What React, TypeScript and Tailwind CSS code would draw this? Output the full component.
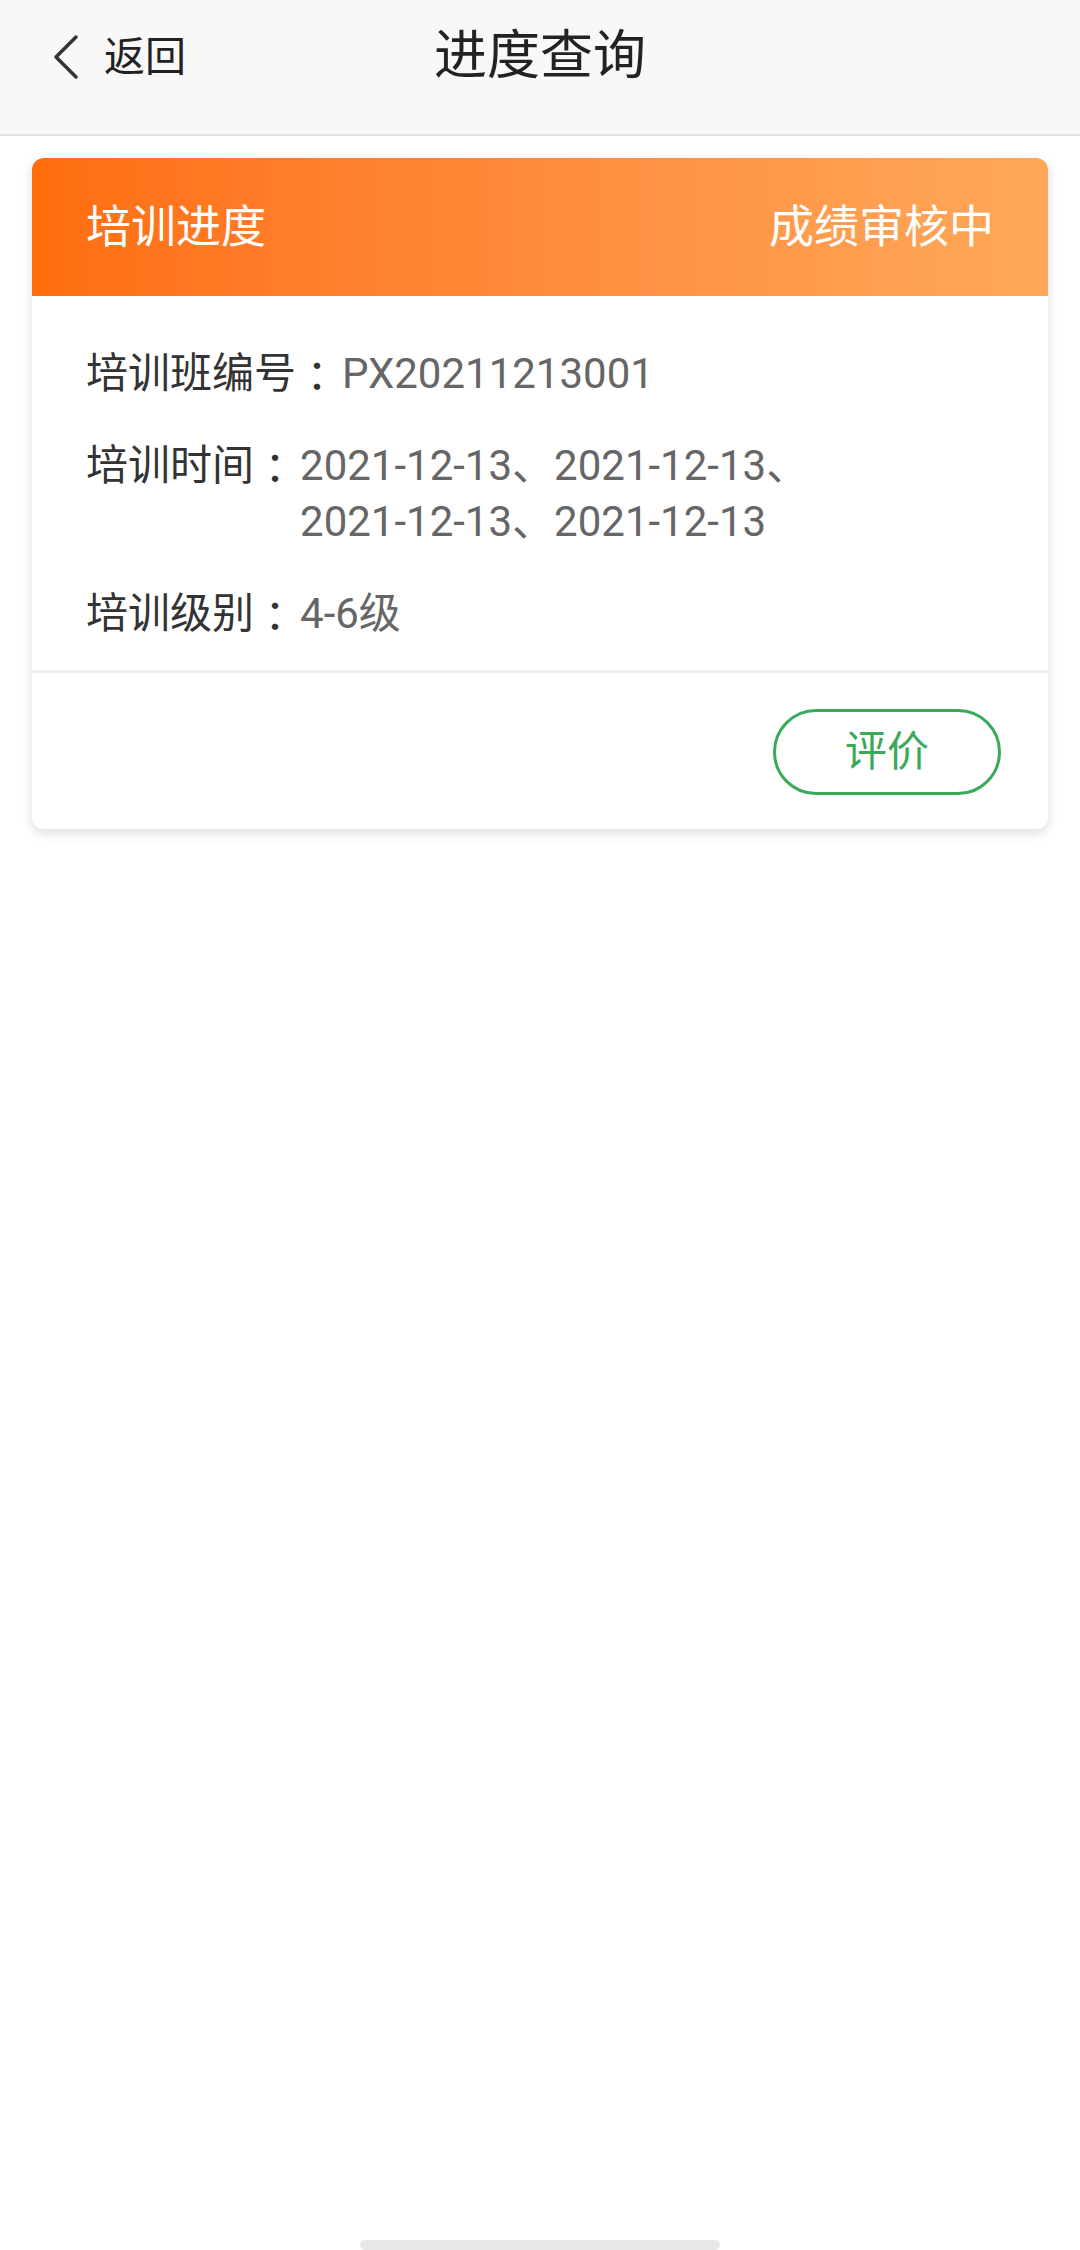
import React from "react";

const Colon = () => (
  <span className="inline-block h-[56px] leading-[56px] align-top" style={{ fontFamily: '"Noto Sans CJK JP", sans-serif' }}>：</span>
);

export default function App() {
  const font = { fontFamily: 'Roboto, "Noto Sans CJK SC", sans-serif' };
  return (
    <div className="w-[1080px] h-[2250px] bg-white flex flex-col relative overflow-hidden" style={font}>
      {/* Header */}
      <div className="h-[136px] bg-[#f8f8f8] border-b-2 border-[#e2e2e2] flex items-center relative shrink-0">
        <div className="flex items-center pl-[50px] gap-[24px] -mt-[20px]">
          <svg width="30" height="46" viewBox="0 0 30 46" fill="none">
            <path d="M26 3 L6 23 L26 43" stroke="#333" strokeWidth="3.5" strokeLinecap="round" strokeLinejoin="round" />
          </svg>
          <span className="text-[41px] text-[#222] leading-none">返回</span>
        </div>
        <div className="absolute left-0 right-0 top-0 h-[112px] flex items-center justify-center pointer-events-none">
          <span className="text-[53px] text-[#222] leading-none">进度查询</span>
        </div>
      </div>

      {/* Card */}
      <div className="mx-[32px] mt-[22px] rounded-[12px] bg-white shadow-[0_4px_12px_rgba(0,0,0,0.14)] overflow-hidden">
        <div className="h-[138px] bg-gradient-to-r from-[#ff6d0c] to-[#ffa85a] flex items-center justify-between px-[54px]">
          <span className="text-[45px] text-white leading-none">培训进度</span>
          <span className="text-[45px] text-white leading-none">成绩审核中</span>
        </div>
        <div className="pt-[50px] pb-[28px] px-[54px] flex flex-col gap-[36px]">
          <div className="flex text-[42px] leading-[56px]">
            <span className="text-[#333] whitespace-nowrap h-[56px]">培训班编号<Colon /></span>
            <span className="text-[#666] pl-[4px]">PX20211213001</span>
          </div>
          <div className="flex text-[42px] leading-[56px]">
            <span className="text-[#333] whitespace-nowrap h-[56px]">培训时间<Colon /></span>
            <span className="text-[#666] w-[580px] pl-[4px]">2021-12-13、2021-12-13、<br />2021-12-13、2021-12-13</span>
          </div>
          <div className="flex text-[42px] leading-[56px]">
            <span className="text-[#333] whitespace-nowrap h-[56px]">培训级别<Colon /></span>
            <span className="text-[#666] pl-[4px]">4-6级</span>
          </div>
        </div>
        <div className="h-[3px] bg-[#eeeeee]" />
        <div className="flex justify-end pt-[36px] pb-[34px] pr-[47px]">
          <button className="w-[228px] h-[86px] rounded-full border-[3px] border-[#3aa95a] text-[#3aa95a] text-[42px] leading-none flex items-center justify-center">
            评价
          </button>
        </div>
      </div>

      {/* Home indicator */}
      <div className="absolute bottom-0 left-[360px] w-[360px] h-[10px] rounded-full bg-[#e8e8e8]" />
    </div>
  );
}
